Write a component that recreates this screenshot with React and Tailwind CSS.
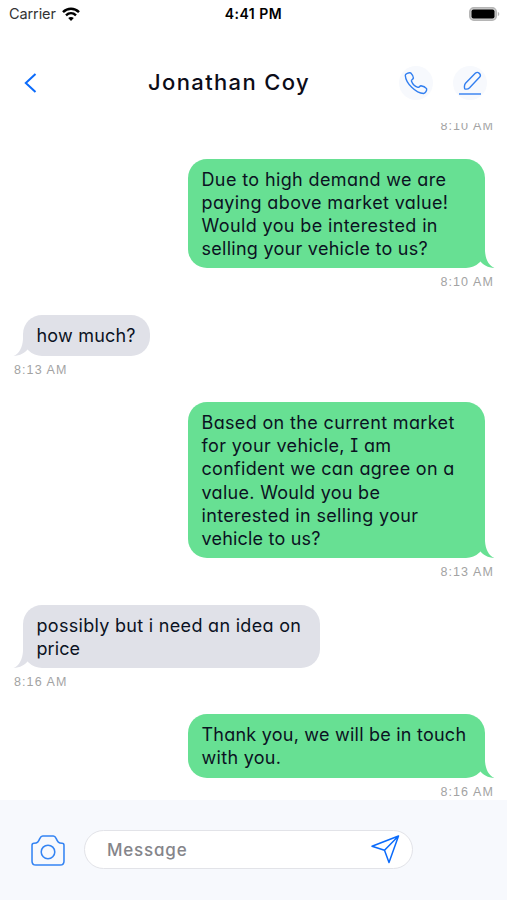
import clsx from 'clsx';

const messages = [
  {
    id: 1,
    mine: true,
    time: '8:10 AM',
    gap: 'mt-[23.5px]',
    lines: [
      { text: 'Due to high demand we are', spacing: 'tracking-[0.38px]' },
      { text: 'paying above market value!', spacing: 'tracking-[0.37px]' },
      { text: 'Would you be interested in', spacing: 'tracking-[0.38px]' },
      { text: 'selling your vehicle to us?', spacing: 'tracking-[0.27px]' },
    ],
  },
  {
    id: 2,
    mine: false,
    time: '8:13 AM',
    gap: 'mt-[24px]',
    lines: [{ text: 'how much?', spacing: 'tracking-[0.2px]' }],
  },
  {
    id: 3,
    mine: true,
    time: '8:13 AM',
    gap: 'mt-[23.5px]',
    lines: [
      { text: 'Based on the current market', spacing: 'tracking-[0.35px]' },
      { text: 'for your vehicle, I am', spacing: 'tracking-[0.35px]' },
      { text: 'confident we can agree on a', spacing: 'tracking-[0.3px]' },
      { text: 'value. Would you be', spacing: 'tracking-[0.3px]' },
      { text: 'interested in selling your', spacing: 'tracking-[0.35px]' },
      { text: 'vehicle to us?', spacing: 'tracking-[0.2px]' },
    ],
  },
  {
    id: 4,
    mine: false,
    time: '8:16 AM',
    gap: 'mt-[23.5px]',
    lines: [
      { text: 'possibly but i need an idea on', spacing: 'tracking-[0.3px]' },
      { text: 'price', spacing: 'tracking-[0.1px]' },
    ],
  },
  {
    id: 5,
    mine: true,
    time: '8:16 AM',
    gap: 'mt-[23px]',
    lines: [
      { text: 'Thank you, we will be in touch', spacing: 'tracking-[0.23px]' },
      { text: 'with you.', spacing: 'tracking-[0.3px]' },
    ],
  },
];

function StatusBar() {
  return (
    <div className="grid h-[27px] shrink-0 grid-cols-3 items-center pr-[7px] pl-[9px] text-black">
      <div className="flex items-center gap-[6px]">
        <span className="text-[14.5px] tracking-[-0.1px] text-[#333]">Carrier</span>
        <svg className="h-[14px] w-[18px]" viewBox="0 0 18 14" fill="none" stroke="currentColor">
          <path d="M1 5.2C5.6.7 12.4.7 17 5.2" strokeWidth="2.5" />
          <path d="M4 8.4c2.9-2.8 7.1-2.8 10 0" strokeWidth="2.4" />
          <path d="M9 14 6.2 11c1.6-1.5 4-1.5 5.6 0Z" fill="currentColor" stroke="none" />
        </svg>
      </div>
      <div className="pr-[2px] text-center text-[14px] font-semibold tracking-[0.5px] whitespace-nowrap">
        4:41 PM
      </div>
      <svg className="h-[14px] w-[31px] justify-self-end" viewBox="0 0 31 14">
        <rect x="0.8" y="0.8" width="26.4" height="12.4" rx="4" fill="#d0d0d0" stroke="#b5b5b5" strokeWidth="1.6" />
        <rect x="2.5" y="2.5" width="23" height="9" rx="2" />
        <path d="M28.8 4.8c2 .8 2 3.6 0 4.4Z" fill="#b5b5b5" />
      </svg>
    </div>
  );
}

function Header() {
  return (
    <header className="flex h-[96px] shrink-0 items-center pt-[16px] pr-[20px] pl-[17px]">
      <button className="flex w-[42px] pl-[7px]" aria-label="Back">
        <svg className="h-[20px] w-[13px]" viewBox="0 0 13 20" fill="none" stroke="#0b6bfb" strokeWidth="2">
          <path d="M11.5 1 1.8 10l9.7 9" />
        </svg>
      </button>
      <h1 className="flex-1 pb-[2px] text-center text-[22px] font-medium tracking-[1.35px] text-[#0c0c18]">
        Jonathan Coy
      </h1>
      <div className="flex gap-[20px]">
        <button className="flex size-[34px] items-center justify-center rounded-full bg-[#f7f9fd]" aria-label="Call">
          <svg className="size-[24px]" viewBox="0 0 24 24" fill="none" stroke="#327ff0" strokeWidth="1.4" strokeLinejoin="round">
            <path d="M1.300 4.500C1 2.700 5 1.300 6.800 2c1.500 1.500 2.500 3.200 2.600 5-.3 1.300-2.200 1.800-2 2.900 1 2.800 3.700 5.400 6.500 6.500 1.200.3 1.800-1.500 3.100-1.700 1.900.3 4.300 1.400 5.600 2.900.5 1.700-1.200 4.800-3 4.900C11.800 22.300 1.800 12.300 1.300 4.500Z" />
          </svg>
        </button>
        <button className="flex size-[34px] items-center justify-center rounded-full bg-[#f7f9fd]" aria-label="Edit">
          <svg className="size-[24px]" viewBox="0 0 24 24" fill="none" stroke="#327ff0" strokeWidth="1.4" strokeLinejoin="round">
            <path d="m7.500 12.300 10-10.200c2.400-2.100 6.300 1.500 4.200 4L11.600 16.700c-1.300 1.300-3.300 1.600-4.900 1.200-.4-1.800-.3-4.300.8-5.600Z" />
            <path d="M1 23h22" />
          </svg>
        </button>
      </div>
    </header>
  );
}

function Tail({ mine }) {
  return (
    <svg
      className={clsx(
        'absolute bottom-0 h-[20px] w-[20px]',
        mine ? '-right-[10px] text-[#67e093]' : '-left-[10px] -scale-x-100 text-[#e0e1e8]'
      )}
      viewBox="0 0 20 20"
      fill="currentColor"
    >
      <path d="M0 0h10v3c.5 8 3.500 14.500 9.500 17-6.500-.3-11.500-3-15-7.500L0 8Z" />
    </svg>
  );
}

function Message({ message }) {
  const { mine, lines, time, gap } = message;
  return (
    <div className={clsx('flex flex-col', mine ? 'items-end' : 'items-start', gap)}>
      <div
        className={clsx(
          'relative rounded-[19px] pt-[9px] pb-[8px]',
          mine ? 'mr-[9px] w-[297px] bg-[#67e093] pl-[13.5px]' : 'ml-[9px] bg-[#e0e1e8] pr-[14px] pl-[13.5px]',
          !mine && lines.length > 1 && 'w-[297px]'
        )}
      >
        <Tail mine={mine} />
        <p className="relative text-[18px] leading-[23.2px] text-[#0b1222] [font-feature-settings:'cv11','cv08']">
          {lines.map((line) => (
            <span key={line.text} className={clsx('block whitespace-nowrap', line.spacing)}>
              {line.text}
            </span>
          ))}
        </p>
      </div>
      <Time>{time}</Time>
    </div>
  );
}

function Time({ children }) {
  return (
    <time className="mt-[5px] block h-[18px] font-['Liberation_Sans',sans-serif] text-[12.5px] leading-[18px] tracking-[1.1px] text-[#a3a3a3]">
      {children}
    </time>
  );
}

function Composer() {
  return (
    <footer className="flex h-[100px] shrink-0 items-center bg-[#f7f9fd] pl-[31px]">
      <button aria-label="Attach photo">
        <svg className="h-[31px] w-[34px]" viewBox="0 0 35 32" fill="none" stroke="#3484f3" strokeWidth="1.6" strokeLinejoin="round">
          <path d="M3 8.500c3.800 0 4.500-1.300 6-4.700C9.900 1.800 10.500 1 12 1h11c1.500 0 2.100.8 3 2.800 1.500 3.400 2.200 4.700 6 4.700 1.300 0 2 .7 2 2V27c0 2.700-1.300 4-4 4H5c-2.700 0-4-1.300-4-4V10.500c0-1.300.7-2 2-2Z" />
          <circle cx="17.500" cy="17.500" r="7" />
        </svg>
      </button>
      <div className="mb-px ml-[19px] flex h-[39px] w-[329px] items-center justify-between rounded-full border border-[#e2e3e8] bg-white pr-[12px] pl-[22px]">
        <span className="pt-[2px] text-[17px] font-medium tracking-[0.8px] text-[#85858a] [font-feature-settings:'cv11']">
          Message
        </span>
        <svg className="size-[29px]" viewBox="0 0 29 29" fill="none" stroke="#0b6bfb" strokeWidth="1.5" strokeLinejoin="round">
          <path d="M27.500 1 1 11.300l12.500 4L18 27.500ZM13.500 15.300 27.500 1" />
        </svg>
      </div>
    </footer>
  );
}

export default function App() {
  return (
    <div className="flex h-[900px] w-[507px] flex-col overflow-hidden bg-white font-['Inter',sans-serif]">
      <StatusBar />
      <Header />
      <main className="flex min-h-0 flex-1 flex-col overflow-hidden pr-[13px] pl-[14px]">
        <div className="-mt-[11px] flex justify-end">
          <Time>8:10 AM</Time>
        </div>
        {messages.map((message) => (
          <Message key={message.id} message={message} />
        ))}
      </main>
      <Composer />
    </div>
  );
}
